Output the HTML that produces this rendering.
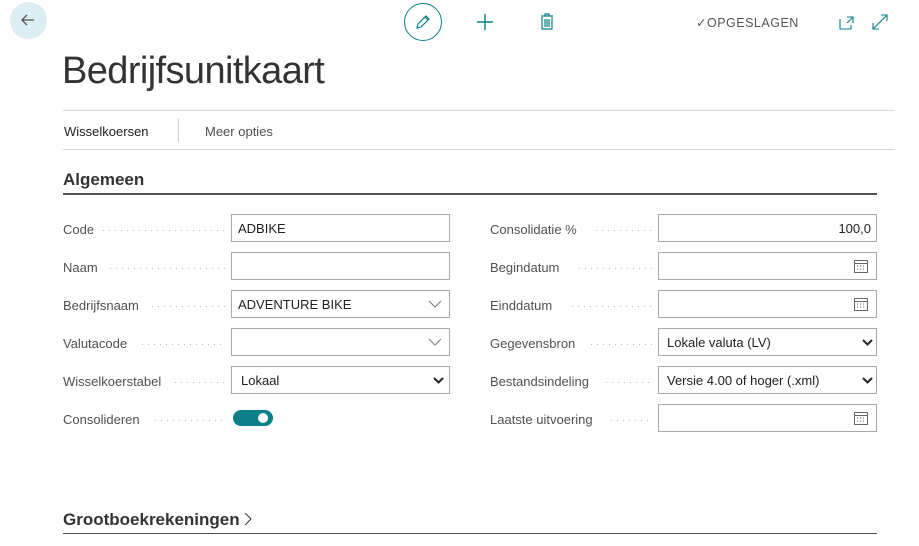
<!DOCTYPE html><html><head><style>
body{margin:0;width:919px;height:546px;background:#fff;font-family:"Liberation Sans",sans-serif;color:#212121;position:relative;overflow:hidden}
.a{position:absolute}
.lbl{position:absolute;font-size:13px;color:#505050;white-space:nowrap}
.dots{position:absolute;height:1px;background:repeating-linear-gradient(90deg,#b8b8b8 0 1px,transparent 1px 6px)}
.in{position:absolute;width:217px;height:26px;border:1px solid #a8a8a8;background:#fff;font-size:13px;line-height:28px;box-sizing:content-box}
.in span{padding-left:6px}
</style></head><body>
<div class="a" style="left:10px;top:2px;width:37px;height:37px;border-radius:50%;background:#dcedf3"></div>
<svg class="a" style="left:18px;top:10px" width="20" height="20"><path d="M16 10H4M9 5L4 10L9 15" stroke="#555" stroke-width="1.3" fill="none"/></svg>
<div class="a" style="left:404px;top:3px;width:36px;height:36px;border-radius:50%;border:1px solid #0a7f87"></div>
<svg class="a" style="left:413px;top:12px" width="20" height="20"><path d="M4 16L5 12L13 4L16 7L8 15Z M12 5L15 8" stroke="#0a7f87" stroke-width="1.2" fill="none"/></svg>
<svg class="a" style="left:476px;top:13px" width="18" height="18"><path d="M9 1V17M1 9H17" stroke="#0a7f87" stroke-width="1.4"/></svg>
<svg class="a" style="left:539px;top:13px" width="16" height="18"><path d="M2 3H14M6 3V1H10V3M3 4V16H13V4M6 6V14M8 6V14M10 6V14" stroke="#0a7f87" stroke-width="1.2" fill="none"/></svg>
<div class="a" style="left:696px;top:15px;font-size:12.5px;color:#555;letter-spacing:.5px">✓OPGESLAGEN</div>
<svg class="a" style="left:838px;top:14px" width="18" height="18"><path d="M2 5V15H13V11M9 3H15V9M15 3L9 9" stroke="#0a7f87" stroke-width="1.1" fill="none"/></svg>
<svg class="a" style="left:871px;top:13px" width="18" height="18"><path d="M2 16L16 2M10 2H16V8M2 10V16H8" stroke="#0a7f87" stroke-width="1.1" fill="none"/></svg>
<div class="a" style="left:62px;top:50px;font-size:38px;font-weight:300;color:#333;letter-spacing:-0.6px">Bedrijfsunitkaart</div>
<div class="a" style="left:63px;top:110px;width:832px;border-top:1px solid #d6d6d6"></div>
<div class="a" style="left:64px;top:124px;font-size:13px">Wisselkoersen</div>
<div class="a" style="left:178px;top:119px;height:23px;border-left:1px solid #ccc"></div>
<div class="a" style="left:205px;top:124px;font-size:13px;color:#505050">Meer opties</div>
<div class="a" style="left:63px;top:149px;width:832px;border-top:1px solid #d6d6d6"></div>
<div class="a" style="left:63px;top:170px;font-size:17px;font-weight:bold;color:#333">Algemeen</div>
<div class="a" style="left:63px;top:193px;width:814px;border-top:2px solid #505050"></div>

<div class="lbl" style="left:63px;top:222px">Code</div><div class="dots" style="left:103px;top:230px;width:122px"></div>
<div class="in" style="left:231px;top:214px"><span>ADBIKE</span></div>
<div class="lbl" style="left:63px;top:260px">Naam</div><div class="dots" style="left:110px;top:268px;width:115px"></div>
<div class="in" style="left:231px;top:252px"></div>
<div class="lbl" style="left:63px;top:298px">Bedrijfsnaam</div><div class="dots" style="left:152px;top:306px;width:73px"></div>
<div class="in" style="left:231px;top:290px"><span>ADVENTURE BIKE</span><svg class="a" style="left:196px;top:9px" width="14" height="9"><path d="M1 1L7 7L13 1" stroke="#777" fill="none"/></svg></div>
<div class="lbl" style="left:63px;top:336px">Valutacode</div><div class="dots" style="left:142px;top:344px;width:83px"></div>
<div class="in" style="left:231px;top:328px"><svg class="a" style="left:196px;top:9px" width="14" height="9"><path d="M1 1L7 7L13 1" stroke="#777" fill="none"/></svg></div>
<div class="lbl" style="left:63px;top:374px">Wisselkoerstabel</div><div class="dots" style="left:175px;top:382px;width:50px"></div>
<div class="in" style="left:231px;top:366px"><span style="padding-left:9px">Lokaal</span><svg class="a" style="left:201px;top:10px" width="11" height="8"><path d="M1 1L5.5 5.5L10 1" stroke="#222" stroke-width="2" fill="none"/></svg></div>
<div class="lbl" style="left:63px;top:412px">Consolideren</div><div class="dots" style="left:155px;top:420px;width:70px"></div>
<div class="a" style="left:233px;top:410px;width:40px;height:16px;border-radius:8px;background:#0a7f87"></div>
<div class="a" style="left:258px;top:413px;width:10px;height:10px;border-radius:50%;background:#fff"></div>

<div class="lbl" style="left:490px;top:222px">Consolidatie %</div><div class="dots" style="left:596px;top:230px;width:56px"></div>
<div class="in" style="left:658px;top:214px;text-align:right"><span style="padding-right:5px">100,0</span></div>
<div class="lbl" style="left:490px;top:260px">Begindatum</div><div class="dots" style="left:579px;top:268px;width:73px"></div>
<div class="in" style="left:658px;top:252px"></div>
<div class="lbl" style="left:490px;top:298px">Einddatum</div><div class="dots" style="left:572px;top:306px;width:80px"></div>
<div class="in" style="left:658px;top:290px"></div>
<div class="lbl" style="left:490px;top:336px">Gegevensbron</div><div class="dots" style="left:591px;top:344px;width:61px"></div>
<div class="in" style="left:658px;top:328px"><span style="padding-left:8px">Lokale valuta (LV)</span><svg class="a" style="left:203px;top:10px" width="11" height="8"><path d="M1 1L5.5 5.5L10 1" stroke="#222" stroke-width="2" fill="none"/></svg></div>
<div class="lbl" style="left:490px;top:374px">Bestandsindeling</div><div class="dots" style="left:606px;top:382px;width:46px"></div>
<div class="in" style="left:658px;top:366px"><span style="padding-left:8px">Versie 4.00 of hoger (.xml)</span><svg class="a" style="left:203px;top:10px" width="11" height="8"><path d="M1 1L5.5 5.5L10 1" stroke="#222" stroke-width="2" fill="none"/></svg></div>
<div class="lbl" style="left:490px;top:412px">Laatste uitvoering</div><div class="dots" style="left:611px;top:420px;width:41px"></div>
<div class="in" style="left:658px;top:404px"></div>
<svg class="a" style="left:853px;top:258px" width="16" height="16"><path d="M1.5 2.5H14.5V14.5H1.5ZM1.5 5.5H14.5M4 8h1M7 8h1M10 8h1M4 11h1M7 11h1M10 11h1" stroke="#666" fill="none"/></svg>
<svg class="a" style="left:853px;top:296px" width="16" height="16"><path d="M1.5 2.5H14.5V14.5H1.5ZM1.5 5.5H14.5M4 8h1M7 8h1M10 8h1M4 11h1M7 11h1M10 11h1" stroke="#666" fill="none"/></svg>
<svg class="a" style="left:853px;top:410px" width="16" height="16"><path d="M1.5 2.5H14.5V14.5H1.5ZM1.5 5.5H14.5M4 8h1M7 8h1M10 8h1M4 11h1M7 11h1M10 11h1" stroke="#666" fill="none"/></svg>

<div class="a" style="left:63px;top:510px;font-size:17px;font-weight:bold;color:#333">Grootboekrekeningen</div>
<svg class="a" style="left:243px;top:512px" width="10" height="14"><path d="M2 1L8 7L2 13" stroke="#333" fill="none"/></svg>
<div class="a" style="left:63px;top:533px;width:814px;border-top:1px solid #505050"></div>
</body></html>
